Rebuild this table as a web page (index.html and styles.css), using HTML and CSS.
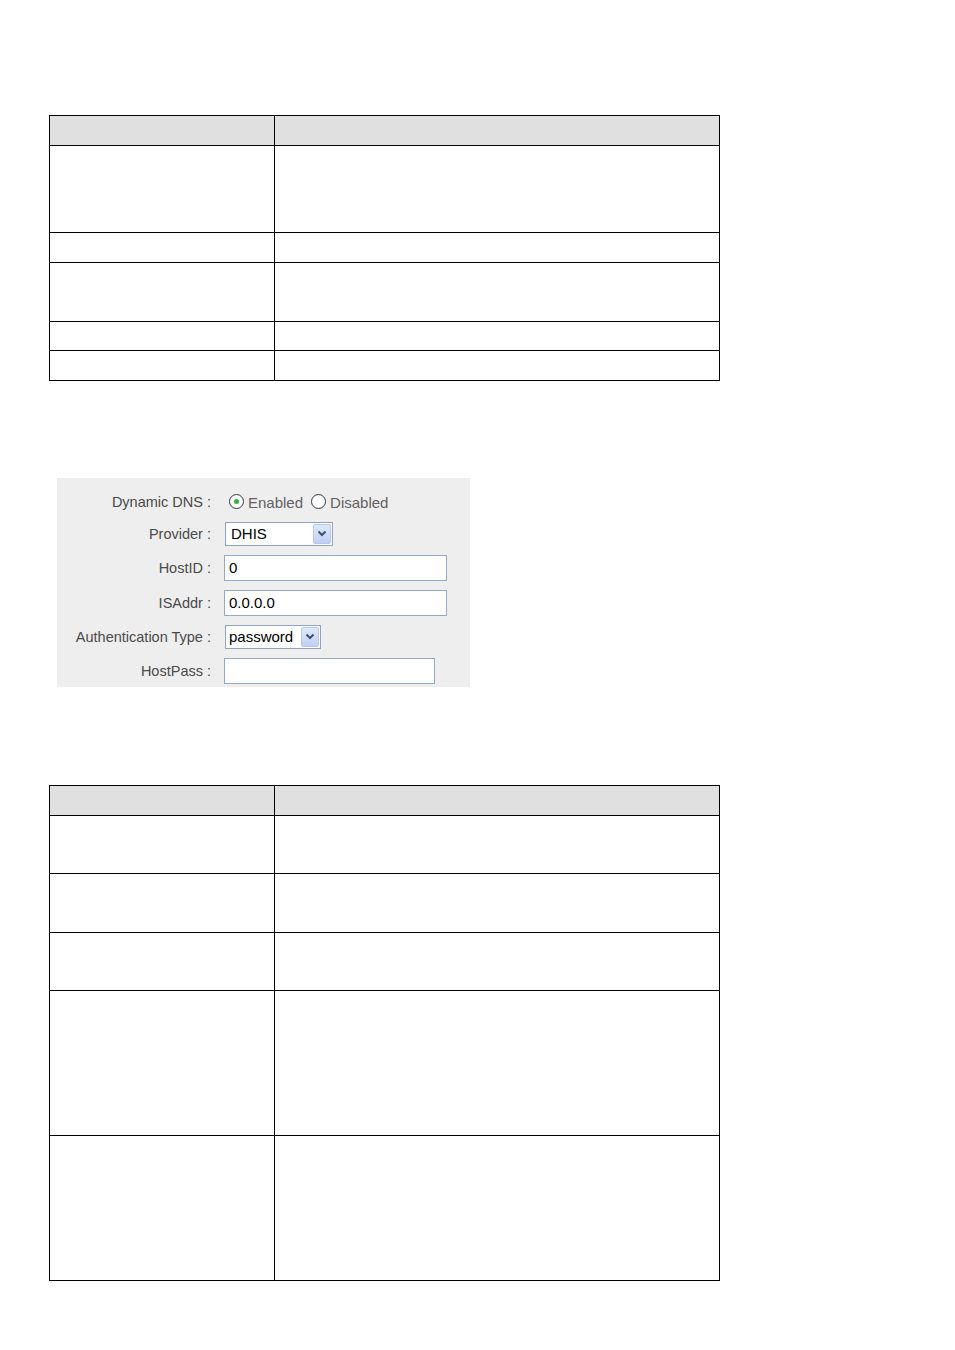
FILE: index.html
```html
<!DOCTYPE html>
<html lang="en">
<head>
  <meta charset="UTF-8" />
  <meta name="viewport" content="width=device-width, initial-scale=1" />
  <title>Dynamic DNS</title>
  <link rel="stylesheet" href="styles.css">
</head>
<body>

<main class="page">

  <table class="spec-table">
    <colgroup>
      <col class="col-name">
      <col class="col-desc">
    </colgroup>
    <thead>
      <tr class="row-1"><th></th><th></th></tr>
    </thead>
    <tbody>
      <tr class="row-3"><td></td><td></td></tr>
      <tr class="row-1"><td></td><td></td></tr>
      <tr class="row-2"><td></td><td></td></tr>
      <tr class="row-1 row-tight"><td></td><td></td></tr>
      <tr class="row-1"><td></td><td></td></tr>
    </tbody>
  </table>

  <form class="ddns-panel">
    <span class="ddns-label">Dynamic DNS :</span>
    <div class="radios">
      <label class="radio"><input type="radio" name="ddns" checked><span>Enabled</span></label>
      <label class="radio"><input type="radio" name="ddns"><span>Disabled</span></label>
    </div>

    <span class="ddns-label">Provider :</span>
    <div class="select select-provider">
      <span class="select-value">DHIS</span>
      <span class="select-btn">
        <svg width="10" height="7" viewBox="0 0 10 7"><path d="M1.5 1.5 L5 5 L8.5 1.5" fill="none" stroke="#3e5079" stroke-width="2"/></svg>
      </span>
    </div>

    <label class="ddns-label" for="host-id">HostID :</label>
    <input class="text-input" type="text" id="host-id" value="0">

    <label class="ddns-label" for="is-addr">ISAddr :</label>
    <input class="text-input" type="text" id="is-addr" value="0.0.0.0">

    <span class="ddns-label">Authentication Type :</span>
    <div class="select select-auth">
      <span class="select-value">password</span>
      <span class="select-btn">
        <svg width="10" height="7" viewBox="0 0 10 7"><path d="M1.5 1.5 L5 5 L8.5 1.5" fill="none" stroke="#3e5079" stroke-width="2"/></svg>
      </span>
    </div>

    <label class="ddns-label" for="host-pass">HostPass :</label>
    <input class="text-input text-input-short" type="password" id="host-pass">
  </form>

  <table class="spec-table">
    <colgroup>
      <col class="col-name">
      <col class="col-desc">
    </colgroup>
    <thead>
      <tr class="row-1"><th></th><th></th></tr>
    </thead>
    <tbody>
      <tr class="row-2"><td></td><td></td></tr>
      <tr class="row-2"><td></td><td></td></tr>
      <tr class="row-2"><td></td><td></td></tr>
      <tr class="row-5"><td></td><td></td></tr>
      <tr class="row-5"><td></td><td></td></tr>
    </tbody>
  </table>

</main>

</body>
</html>
```

FILE: styles.css
```css
* { margin: 0; padding: 0; box-sizing: border-box; }

body {
  font-family: 'Liberation Sans', Arial, sans-serif;
  background: #fff;
  color: #000;
}

.page {
  padding: 115px 0 60px 49px;
}

/* spec tables */
.spec-table {
  border-collapse: collapse;
  width: 671px;
  table-layout: fixed;
}

.col-name { width: 225px; }

.spec-table th,
.spec-table td {
  border: 1px solid #000;
  padding: 0;
}

.spec-table th { background: #e0e0e0; }

.row-1 { height: 30px; }
.row-tight { height: 29px; }
.row-2 { height: 58.5px; }
.row-3 { height: 87px; }
.row-5 { height: 145px; }

/* dynamic dns form */
.ddns-panel {
  display: grid;
  grid-template-columns: 154px auto;
  column-gap: 13px;
  row-gap: 9px;
  align-items: center;
  justify-items: start;
  width: 413px;
  margin: 97px 0 98px 8px;
  padding: 13px 0 3px;
  background: #eeeeee;
}

.ddns-label {
  justify-self: end;
  font-size: 14.5px;
  color: #4a4a4a;
}

.radios {
  display: flex;
  align-items: center;
  height: 22px;
  padding-left: 5px;
  gap: 8px;
}

.radio {
  display: flex;
  align-items: center;
  gap: 4px;
  font-size: 15px;
  color: #646064;
}

.radio span { padding-top: 2px; }

.radio input {
  appearance: none;
  width: 15px;
  height: 15px;
  border: 1px solid #2f3640;
  border-radius: 50%;
  background: #fff;
  display: grid;
  place-items: center;
}

.radio input:checked::after {
  content: '';
  width: 5px;
  height: 5px;
  border-radius: 50%;
  background: #2fb53a;
}

.select {
  display: flex;
  align-items: center;
  justify-content: space-between;
  height: 24px;
  border: 1px solid #8fa3c3;
  background: #fff;
  padding: 0 1px 0 5px;
  font-size: 15px;
  margin-left: 1px;
}

.select-provider { width: 108px; }
.select-auth { width: 96px; padding-left: 3px; }

.select-btn {
  display: flex;
  align-items: center;
  justify-content: center;
  width: 18px;
  height: 20px;
  border: 1px solid #b9c8e6;
  border-radius: 2px;
  background: linear-gradient(#dfe8fb, #c1d0f2);
}

.text-input {
  width: 223px;
  height: 26px;
  border: 1px solid #94a9c6;
  padding: 0 4px;
  font-family: 'Liberation Sans', Arial, sans-serif;
  font-size: 15px;
  color: #000;
  background: #fff;
}

.text-input-short { width: 211px; }
```
